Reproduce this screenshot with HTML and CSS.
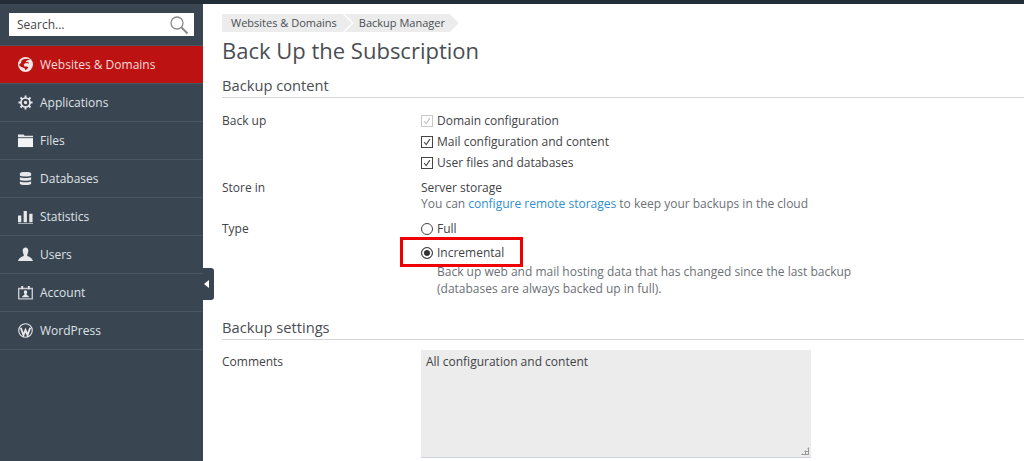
FILE: index.html
```html
<!DOCTYPE html>
<html lang="en">
<head>
    <meta charset="UTF-8">
    <title>Back Up the Subscription</title>
    <link rel="stylesheet" href="styles.css">
</head>
<body>
    <div class="topbar"></div>
    <div class="page">
        <nav class="sidebar">
            <div class="search-wrap">
                <div class="search">
                    <span>Search...</span>
                    <svg width="22" height="22" viewBox="0 0 22 22" fill="none" stroke="#8a8a8a">
                        <circle cx="9" cy="9" r="6" stroke-width="1.3"/>
                        <path d="M13.5 13.5l6 6" stroke-width="2"/>
                    </svg>
                </div>
            </div>
            <a class="item active">
                <svg class="icon" viewBox="0 0 16 16"><circle cx="8" cy="8" r="8" fill="#f7e6e6"/><path d="M6 2.500c2-1 5-1 7 .5l-3 .5-2 1.500 3 .5 1 1.500-4-.5-2 1.500 1 2 3 0 1 1.500-3 2.500-1-2-4-1.500-2-2 2-2 1-3z" fill="#bd1212"/></svg>
                Websites &amp; Domains
            </a>
            <a class="item">
                <svg class="icon" viewBox="0 0 16 16"><circle cx="8" cy="8" r="4.800" fill="none" stroke="#e6e8ea" stroke-width="1.800"/><circle cx="8" cy="8" r="1.800" fill="#e6e8ea"/><path d="M8 .5v3M8 12.500v3M.5 8h3M12.500 8h3M2.700 2.700l2.100 2.100M11.200 11.200l2.100 2.100M13.300 2.700l-2.100 2.100M4.800 11.200l-2.100 2.100" stroke="#e6e8ea" stroke-width="2"/></svg>
                Applications
            </a>
            <a class="item">
                <svg class="icon" viewBox="0 0 16 16"><path d="M0 1.500h6l1 1.500h9v1.500H0z" fill="#e6e8ea"/><path d="M0 5.500h16V15H0z" fill="#f2f3f4"/></svg>
                Files
            </a>
            <a class="item">
                <svg class="icon" viewBox="0 0 16 16"><path d="M2 2.500C2 .5 14 .5 14 2.500v2.300c-1 1.500-11 1.500-12 0zM2 6.300c1 1.500 11 1.500 12 0v3c-1 1.500-11 1.500-12 0zM2 10.800c1 1.500 11 1.500 12 0v2.700c0 2-12 2-12 0z" fill="#e6e8ea"/></svg>
                Databases
            </a>
            <a class="item">
                <svg class="icon" viewBox="0 0 16 16"><path d="M0 7h3.500v7H0zM6 2h3.500v12H6zM12 5h3.500v9H12z" fill="#e6e8ea"/><path d="M0 15h16v1H0z" fill="#aeb4ba"/></svg>
                Statistics
            </a>
            <a class="item">
                <svg class="icon" viewBox="0 0 16 16"><path d="M8 .5c2 0 3 1.500 3 3.500S10 7.500 9.700 9c0 1 5.300 1.500 6.300 6H0c1-4.500 6.300-5 6.300-6C6 7.500 5 6 5 4S6 .5 8 .5z" fill="#e6e8ea"/></svg>
                Users
            </a>
            <a class="item">
                <svg class="icon" viewBox="0 0 16 16"><path d="M0 3h16v12.500H0zM1.500 4.500v9.500h13V4.500z" fill="#c5c9ce"/><path d="M3.500 1h2v3.500h-2zM10.500 1h2v3.500h-2z" fill="#e6e8ea"/><path d="M8 5.500c1.300 0 1.800 1 1.800 2S9 9.500 9 10c0 .5 2.500 1 3 3H4c.5-2 3-2.500 3-3 0-.5-.8-1.500-.8-2.500s.5-2 1.800-2z" fill="#e6e8ea"/></svg>
                Account
            </a>
            <a class="item">
                <svg class="icon" viewBox="0 0 16 16"><circle cx="8" cy="8" r="7.200" fill="none" stroke="#e6e8ea" stroke-width="1.200"/><path d="M3 5l2.800 8L8 7.500 10.200 13 13 5" fill="none" stroke="#e6e8ea" stroke-width="2"/></svg>
                WordPress
            </a>
            <div class="collapse"></div>
        </nav>
        <main class="content">
            <div class="breadcrumbs">
                <span class="crumb">Websites &amp; Domains</span>
                <span class="crumb">Backup Manager</span>
            </div>
            <h1>Back Up the Subscription</h1>

            <h2>Backup content</h2>
            <div class="row backup-row">
                <div class="label">Back up</div>
                <div class="field">
                    <div class="check disabled"><span class="box"><svg viewBox="0 0 12 12"><path d="M2.500 6l2.500 3 4.500-6.500" fill="none" stroke="#c4c4c4" stroke-width="1.300"/></svg></span>Domain configuration</div>
                    <div class="check"><span class="box"><svg viewBox="0 0 12 12"><path d="M2.500 6l2.500 3 4.500-6.500" fill="none" stroke="#444" stroke-width="1.300"/></svg></span>Mail configuration and content</div>
                    <div class="check"><span class="box"><svg viewBox="0 0 12 12"><path d="M2.500 6l2.500 3 4.500-6.500" fill="none" stroke="#444" stroke-width="1.300"/></svg></span>User files and databases</div>
                </div>
            </div>
            <div class="row store-row">
                <div class="label">Store in</div>
                <div class="field">
                    <div>Server storage</div>
                    <div class="hint">You can <a>configure remote storages</a> to keep your backups in the cloud</div>
                </div>
            </div>
            <div class="row type-row">
                <div class="label">Type</div>
                <div class="field">
                    <div class="radio"><span class="dot"></span>Full</div>
                    <div class="radio selected"><span class="dot"></span>Incremental<span class="marker"></span></div>
                    <div class="hint indent">Back up web and mail hosting data that has changed since the last backup<br>(databases are always backed up in full).</div>
                </div>
            </div>

            <h2 class="second">Backup settings</h2>
            <div class="row">
                <div class="label comment-label">Comments</div>
                <div class="textarea">All configuration and content
                    <span class="grip"></span>
                </div>
            </div>
        </main>
    </div>
</body>
</html>
```

FILE: styles.css
```css
* {
    margin: 0;
    padding: 0;
    box-sizing: border-box;
}
html, body {
    height: 461px;
    overflow: hidden;
}
body {
    background-color: #fff;
    color: #3f4347;
    font-family: "Open Sans", sans-serif;
    font-size: 12px;
}
.topbar {
    height: 4px;
    background-color: #222d38;
}
.page {
    display: flex;
    height: 457px;
}
.sidebar {
    position: relative;
    width: 203px;
    flex: none;
    background-color: #3a4552;
}
.search-wrap {
    height: 42px;
    padding: 9px 9px 0;
    border-bottom: 1px solid #4a5563;
}
.search {
    height: 23px;
    width: 185px;
    padding: 0 4px 0 8px;
    background-color: #fff;
    color: #444;
    font-size: 12px;
    display: flex;
    align-items: center;
    justify-content: space-between;
}
.item {
    height: 38px;
    padding-left: 18px;
    display: flex;
    align-items: center;
    gap: 7px;
    color: #dfe2e5;
    font-size: 12px;
    border-bottom: 1px solid #4a5563;
}
.item.active {
    background-color: #bd1212;
    border-bottom-color: #4a5563;
    color: #f6dcdc;
}
.icon {
    width: 15px;
    height: 15px;
    flex: none;
}
.collapse {
    position: absolute;
    top: 264px;
    left: 203px;
    width: 11px;
    height: 32px;
    background-color: #3a4552;
    border-radius: 0 3px 3px 0;
}
.collapse::after {
    content: "";
    position: absolute;
    top: 12px;
    left: 1px;
    border-style: solid;
    border-width: 4px 5px 4px 0;
    border-color: transparent #fff transparent transparent;
}
.content {
    flex: 1;
    padding: 10px 0 0 19px;
    overflow: hidden;
}
.breadcrumbs {
    display: flex;
    height: 18px;
}
.crumb {
    height: 18px;
    line-height: 18px;
    padding: 0 14px;
    margin-left: -7px;
    background-color: #ececec;
    font-size: 11px;
    color: #4a4e52;
    clip-path: polygon(0 0, calc(100% - 9px) 0, 100% 50%, calc(100% - 9px) 100%, 0 100%, 9px 50%);
}
.crumb:first-child {
    margin-left: 0;
    padding: 0 15px 0 9px;
    clip-path: polygon(0 0, calc(100% - 9px) 0, 100% 50%, calc(100% - 9px) 100%, 0 100%);
}
h1 {
    font-size: 22px;
    font-weight: 400;
    line-height: 30px;
    margin-top: 3px;
    color: #4a4e52;
}
h2 {
    font-size: 14.7px;
    font-weight: 400;
    line-height: 20px;
    height: 23px;
    margin-top: 10px;
    color: #4a4e52;
    border-bottom: 1px solid #d5d5d5;
}
h2.second {
    margin-top: 20px;
    margin-bottom: 10px;
}
.row {
    display: flex;
    line-height: 17px;
}
.label {
    width: 199px;
    flex: none;
}
.backup-row {
    padding-top: 14px;
}
.check {
    height: 21px;
    display: flex;
    align-items: flex-start;
    color: #3f4347;
}
.box {
    width: 12px;
    height: 12px;
    margin: 3px 4px 0 0;
    border: 1px solid #444;
    background-color: #fff;
    display: block;
}
.box svg {
    display: block;
    width: 10px;
    height: 10px;
}
.check.disabled .box {
    border-color: #c9c9c9;
}
.store-row {
    padding-top: 4px;
}
.hint {
    color: #6c7075;
    margin-top: -1px;
}
.hint a {
    color: #2f8fd0;
}
.hint.indent {
    padding-left: 16px;
}
.type-row {
    padding-top: 8px;
}
.radio {
    position: relative;
    height: 24px;
    display: flex;
    align-items: flex-start;
}
.dot {
    width: 12px;
    height: 12px;
    margin: 3px 4px 0 0;
    border: 1px solid #444;
    border-radius: 50%;
    background-color: #fff;
}
.selected .dot {
    background-color: #333;
    box-shadow: inset 0 0 0 2px #fff;
}
.selected {
    height: 19px;
    margin-bottom: 1px;
}
.marker {
    position: absolute;
    top: -7px;
    left: -21px;
    width: 123px;
    height: 30px;
    border: 3px solid #ee0000;
}
.comment-label {
    padding-top: 3px;
}
.textarea {
    position: relative;
    width: 390px;
    height: 108px;
    padding: 3px 5px;
    background-color: #ececec;
    border-bottom: 1px solid #ccd1d8;
    white-space: pre-line;
}
.grip {
    position: absolute;
    right: 2px;
    bottom: 2px;
    width: 8px;
    height: 8px;
    background: radial-gradient(circle, #999 1px, transparent 1.2px) 0 0 / 3px 3px;
    clip-path: polygon(100% 0, 100% 100%, 0 100%);
}
```
